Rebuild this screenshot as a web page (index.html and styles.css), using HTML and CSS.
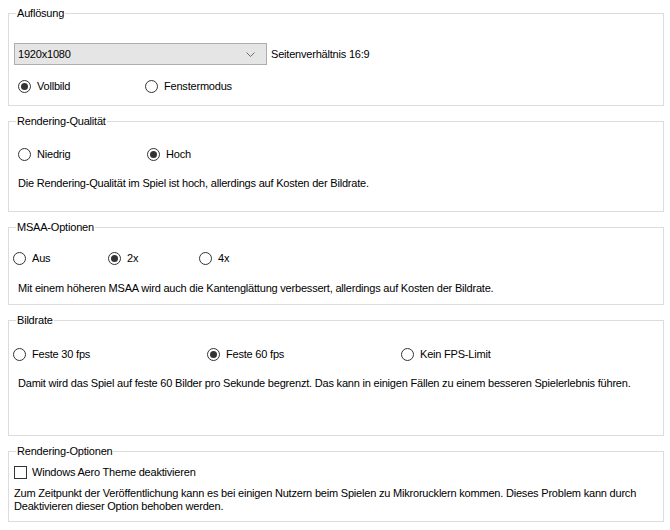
FILE: index.html
```html
<!DOCTYPE html>
<html lang="de">
<head>
  <meta charset="UTF-8">
  <title>Grafikoptionen</title>
  <link rel="stylesheet" href="styles.css">
</head>
<body>
  <div class="settings">
    <fieldset class="group">
      <legend>Auflösung</legend>
      <div class="group-body g-res">
        <div class="combo-row">
          <div class="combo">
            <span>1920x1080</span>
            <svg class="chevron" width="9" height="5" viewBox="0 0 9 5"><path d="M0.5 0.5 L4.5 4.5 L8.5 0.5" fill="none" stroke="#6d6d6d" stroke-width="1"/></svg>
          </div>
          <span class="aspect">Seitenverhältnis 16:9</span>
        </div>
        <div class="radio-row cols-res">
          <label class="radio checked"><span class="dot"></span>Vollbild</label>
          <label class="radio"><span class="dot"></span>Fenstermodus</label>
        </div>
      </div>
    </fieldset>

    <fieldset class="group">
      <legend>Rendering-Qualität</legend>
      <div class="group-body g-quality">
        <div class="radio-row cols-quality">
          <label class="radio"><span class="dot"></span>Niedrig</label>
          <label class="radio checked"><span class="dot"></span>Hoch</label>
        </div>
        <p class="desc">Die Rendering-Qualität im Spiel ist hoch, allerdings auf Kosten der Bildrate.</p>
      </div>
    </fieldset>

    <fieldset class="group">
      <legend>MSAA-Optionen</legend>
      <div class="group-body g-msaa">
        <div class="radio-row cols-msaa">
          <label class="radio"><span class="dot"></span>Aus</label>
          <label class="radio checked"><span class="dot"></span>2x</label>
          <label class="radio"><span class="dot"></span>4x</label>
        </div>
        <p class="desc">Mit einem höheren MSAA wird auch die Kantenglättung verbessert, allerdings auf Kosten der Bildrate.</p>
      </div>
    </fieldset>

    <fieldset class="group">
      <legend>Bildrate</legend>
      <div class="group-body g-fps">
        <div class="radio-row cols-fps">
          <label class="radio"><span class="dot"></span>Feste 30 fps</label>
          <label class="radio checked"><span class="dot"></span>Feste 60 fps</label>
          <label class="radio"><span class="dot"></span>Kein FPS-Limit</label>
        </div>
        <p class="desc">Damit wird das Spiel auf feste 60 Bilder pro Sekunde begrenzt. Das kann in einigen Fällen zu einem besseren Spielerlebnis führen.</p>
      </div>
    </fieldset>

    <fieldset class="group">
      <legend>Rendering-Optionen</legend>
      <div class="group-body g-opts">
        <label class="check"><span class="box"></span>Windows Aero Theme deaktivieren</label>
        <p class="desc">Zum Zeitpunkt der Veröffentlichung kann es bei einigen Nutzern beim Spielen zu Mikrorucklern kommen. Dieses Problem kann durch Deaktivieren dieser Option behoben werden.</p>
      </div>
    </fieldset>
  </div>
</body>
</html>
```

FILE: styles.css
```css
body {
  margin: 0;
  background: #fff;
  color: #000;
  font-family: 'Liberation Sans', Arial, sans-serif;
  font-size: 11px;
  line-height: 13px;
  letter-spacing: -0.2px;
}
.settings {
  padding: 7px 6px 0 8px;
  display: flex;
  flex-direction: column;
  gap: 9px;
}
.group {
  margin: 0;
  padding: 0;
  border: 1px solid #dcdcdc;
  min-width: 0;
}
.group legend {
  margin-left: 7px;
  padding: 0 1px;
}
.group-body {
  display: flex;
  flex-direction: column;
  align-items: flex-start;
}
.g-res { height: 85px; }
.g-quality { height: 83px; }
.g-msaa { height: 70px; }
.g-fps { height: 108px; }
.g-opts { height: 63px; }

.combo-row {
  display: flex;
  align-items: center;
  margin: 23px 0 0 5px;
}
.combo {
  width: 253px;
  height: 22px;
  box-sizing: border-box;
  background: #e5e5e5;
  border: 1px solid #adadad;
  display: flex;
  align-items: center;
  justify-content: space-between;
  padding: 0 11px 0 3px;
}
.aspect {
  margin-left: 4px;
}

.radio-row {
  display: grid;
  height: 14px;
  align-items: center;
}
.cols-res { grid-template-columns: 127px 200px; margin: 14px 0 0 9px; }
.cols-quality { grid-template-columns: 129px 200px; margin: 19px 0 0 9px; }
.cols-msaa { grid-template-columns: 95px 91px 60px; margin: 17px 0 0 4px; }
.cols-fps { grid-template-columns: 194px 194px 150px; margin: 20px 0 0 4px; }

.radio, .check {
  display: flex;
  align-items: center;
  white-space: nowrap;
}
.dot {
  width: 13px;
  height: 13px;
  box-sizing: border-box;
  border: 1px solid #333;
  border-radius: 50%;
  margin-right: 6px;
  display: flex;
  align-items: center;
  justify-content: center;
}
.radio.checked .dot::after {
  content: '';
  width: 7px;
  height: 7px;
  border-radius: 50%;
  background: #333;
}
.check {
  margin: 7px 0 0 5px;
  height: 14px;
}
.box {
  width: 13px;
  height: 13px;
  box-sizing: border-box;
  border: 1px solid #333;
  margin-right: 5px;
}
.desc {
  margin: 16px 0 0 9px;
}
.g-msaa .desc {
  margin-top: 17px;
}
.g-opts .desc {
  margin: 8px 0 0 5px;
  width: 640px;
}
```
